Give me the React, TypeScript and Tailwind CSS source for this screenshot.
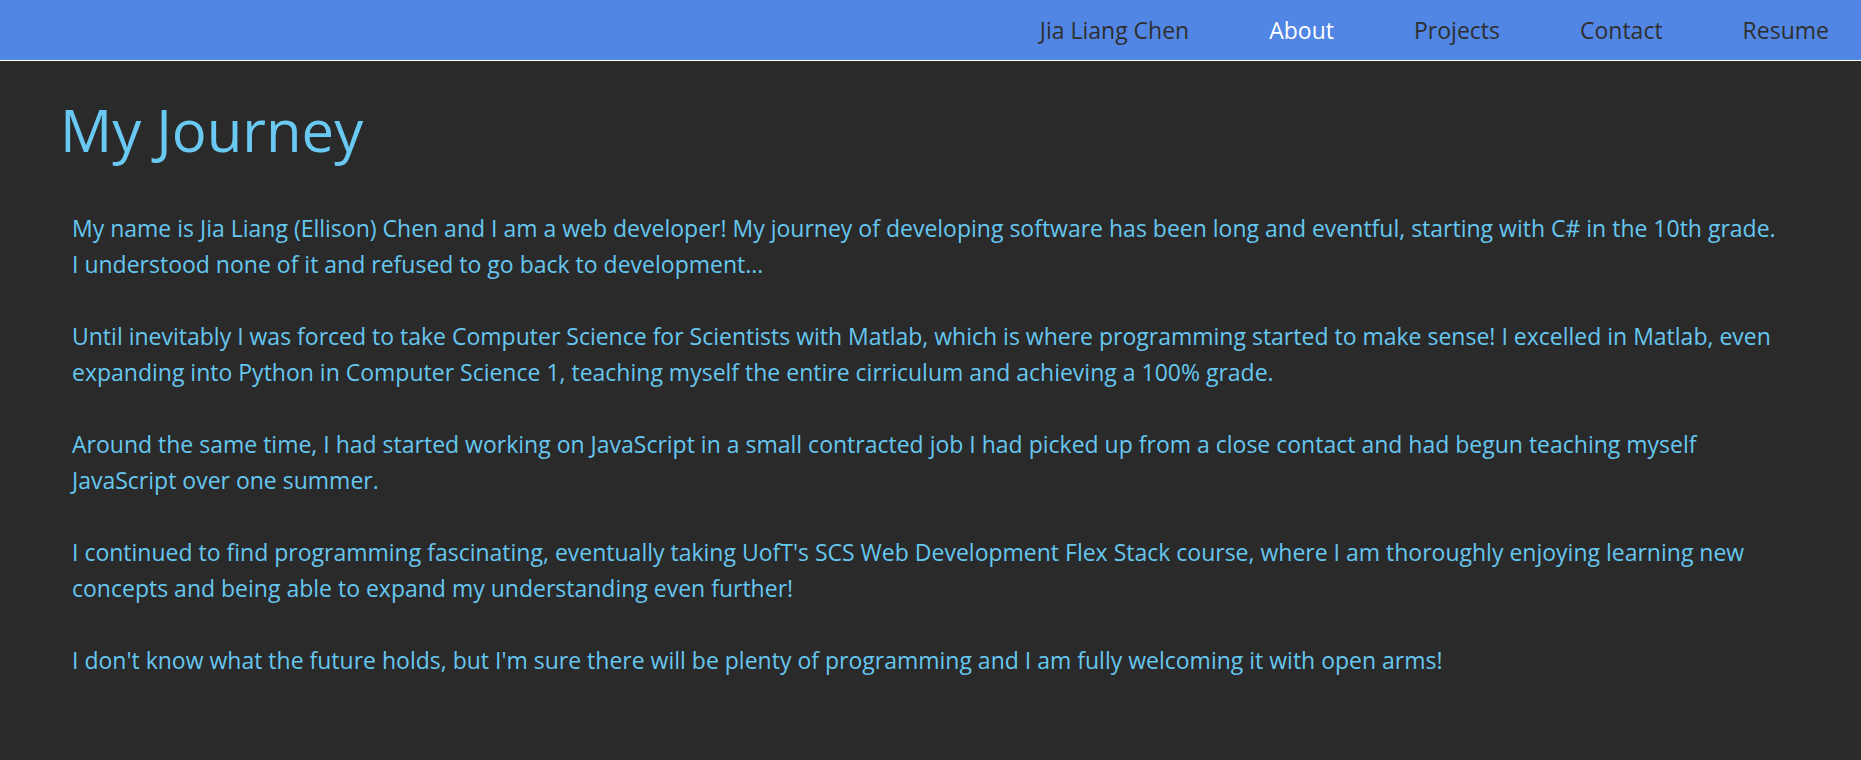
const links = [
  { label: "Jia Liang Chen", active: false },
  { label: "About", active: true },
  { label: "Projects", active: false },
  { label: "Contact", active: false },
  { label: "Resume", active: false },
];

// each paragraph is kept as its rendered lines so the wrapping matches
const paragraphs = [
  [
    "My name is Jia Liang (Ellison) Chen and I am a web developer! My journey of developing software has been long and eventful, starting with C# in the 10th grade.",
    "I understood none of it and refused to go back to development...",
  ],
  [
    "Until inevitably I was forced to take Computer Science for Scientists with Matlab, which is where programming started to make sense! I excelled in Matlab, even",
    "expanding into Python in Computer Science 1, teaching myself the entire cirriculum and achieving a 100% grade.",
  ],
  [
    "Around the same time, I had started working on JavaScript in a small contracted job I had picked up from a close contact and had begun teaching myself",
    "JavaScript over one summer.",
  ],
  [
    "I continued to find programming fascinating, eventually taking UofT's SCS Web Development Flex Stack course, where I am thoroughly enjoying learning new",
    "concepts and being able to expand my understanding even further!",
  ],
  [
    "I don't know what the future holds, but I'm sure there will be plenty of programming and I am fully welcoming it with open arms!",
  ],
];

export default function App() {
  return (
    <div className="min-h-[760px] bg-[#2a2a2a] font-['Open_Sans',sans-serif]">
      <nav className="h-[61px] bg-[#5186e4] border-b border-white flex items-center justify-end pr-[32px] gap-[80px]">
        {links.map((link) => (
          <a
            key={link.label}
            href="#"
            className={`text-[23px] ${link.active ? "text-white" : "text-[#2f2f2f]"}`}
          >
            {link.label}
          </a>
        ))}
      </nav>

      <main className="pl-[60px] pt-[27px]">
        <h1 className="text-[58px] leading-[84px] text-[#69c9f2]">My Journey</h1>
        <div className="mt-[38px] pl-[12px] text-[23px] leading-[36px] text-[#66c7f0]">
          {paragraphs.map((lines, i) => (
            <p key={i} className="mb-[36px]">
              {lines.map((line, j) => (
                <span key={j} className="block whitespace-nowrap">
                  {line}
                </span>
              ))}
            </p>
          ))}
        </div>
      </main>
    </div>
  );
}
